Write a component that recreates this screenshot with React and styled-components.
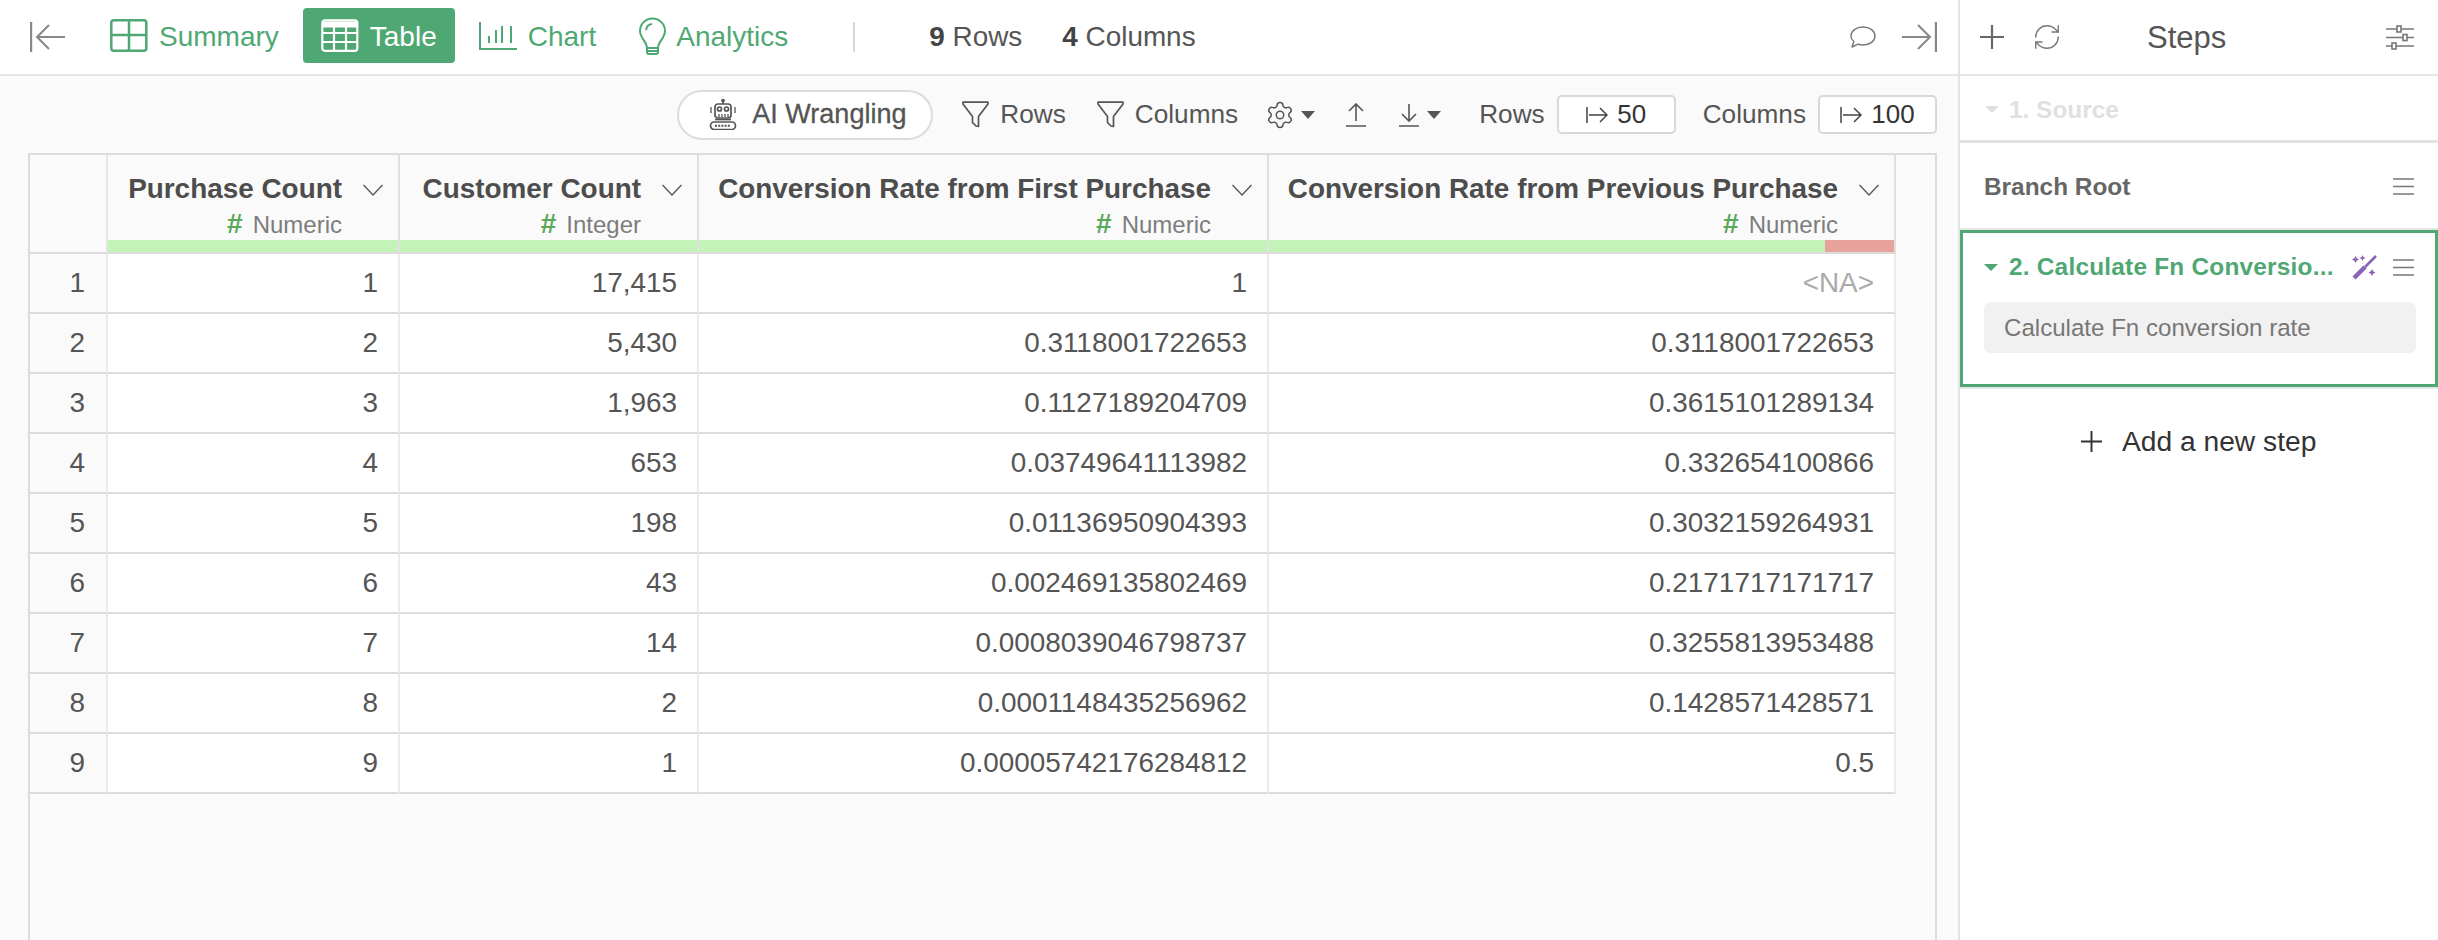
import React from "react";
import styled, { createGlobalStyle } from "styled-components";
import { Settings, RefreshCw } from "lucide-react";

const GREEN = "#4fa873";
const LINE = "#dcdcdc";

const Global = createGlobalStyle`
  html, body { margin: 0; padding: 0; background: #fff; }
  * { box-sizing: border-box; }
  body { font-family: "Liberation Sans", Arial, sans-serif; color: #555; }
`;

const Page = styled.div`
  display: grid;
  grid-template-columns: 1960px 478px;
  width: 2438px;
  height: 940px;
  overflow: hidden;
`;
const Main = styled.main`
  display: flex;
  flex-direction: column;
  min-width: 0;
  border-right: 2px solid #e4e4e4;
  background: #fafafa;
`;
const TopBar = styled.header`
  display: flex;
  align-items: center;
  height: 76px;
  flex: none;
  padding: 0 21px 0 30px;
  background: #fff;
  border-bottom: 2px solid #e6e6e6;
`;
const NavGroup = styled.nav`
  display: flex;
  align-items: center;
  gap: 6px;
  margin-left: 27px;
  padding-bottom: 3px;
`;
const NavItem = styled.div`
  display: flex;
  align-items: center;
  gap: ${(p) => p.$gap || 12}px;
  height: 55px;
  padding: 0 18px;
  border-radius: 4px;
  font-size: 28px;
  line-height: 32px;
  color: ${(p) => (p.$active ? "#fff" : GREEN)};
  background: ${(p) => (p.$active ? GREEN : "transparent")};
  span { padding-top: 3px; }
`;
const Separator = styled.span`
  width: 2px;
  height: 30px;
  margin-left: 47px;
  background: #d8d8d8;
`;
const Stat = styled.div`
  font-size: 27.9px;
  color: #555;
  margin-left: ${(p) => p.$ml}px;
  b { color: #444; }
`;
const Spacer = styled.div`
  flex: 1;
`;
const IconSlot = styled.span`
  display: inline-flex;
  color: ${(p) => p.$color || "#777"};
  margin-left: ${(p) => p.$ml || 0}px;
`;
const Toolbar = styled.div`
  display: flex;
  align-items: center;
  justify-content: flex-end;
  height: 77px;
  flex: none;
  padding-right: 21px;
  font-size: 26.2px;
  color: #555;
`;
const Pill = styled.button`
  display: flex;
  align-items: center;
  gap: 15px;
  width: 256px;
  height: 50px;
  padding: 0 0 0 30px;
  border: 2px solid #dcdcdc;
  border-radius: 25px;
  background: #fff;
  color: #555;
  font: 500 27px "Liberation Sans", Arial, sans-serif;
  -webkit-text-stroke: 0.3px #555;
`;
const ToolItem = styled.div`
  display: flex;
  align-items: center;
  gap: ${(p) => p.$gap ?? 11}px;
  margin-left: ${(p) => p.$ml}px;
`;
const Caret = styled.span`
  width: 0;
  height: 0;
  border-left: 7.5px solid transparent;
  border-right: 7.5px solid transparent;
  border-top: 8px solid #555;
`;
const LimitBox = styled.div`
  display: flex;
  align-items: center;
  justify-content: center;
  gap: 9px;
  width: 119px;
  height: 39px;
  margin-left: 12px;
  border: 2px solid #d8d8d8;
  border-radius: 5px;
  background: #fff;
  color: #333;
  font-size: 26px;
`;
const Frame = styled.section`
  flex: 1;
  margin: 0 21px 0 28px;
  border: 2px solid ${LINE};
  border-bottom: 0;
  background: #fafafa;
  min-height: 0;
`;
const Grid = styled.div`
  display: grid;
  grid-template-columns: 78px 292px 299px 570px 627px;
  width: 1866px;
`;
const Corner = styled.div`
  border-right: 2px solid #e6e6e6;
  border-bottom: 2px solid ${LINE};
`;
const HeadCell = styled.div`
  display: flex;
  flex-direction: column;
  height: 99px;
  background: #fafafa;
  border-right: 2px solid #e0e0e0;
  border-bottom: 2px solid ${LINE};
`;
const HeadText = styled.div`
  flex: 1;
  display: flex;
  flex-direction: column;
  align-items: flex-end;
  padding: 18px 15px 0 0;
`;
const TitleRow = styled.div`
  display: flex;
  align-items: center;
  gap: 21px;
  font-size: 27.9px;
  line-height: 32px;
  font-weight: 700;
  color: #4d4d4d;
  white-space: nowrap;
`;
const TypeRow = styled.div`
  display: flex;
  align-items: baseline;
  gap: 10px;
  margin: 5px 41px 0 0;
  font-size: 24px;
  line-height: 28px;
  color: #7d7d7d;
  b { color: #5aa85a; font-size: 28px; }
`;
const QualityBar = styled.div`
  display: flex;
  height: 12px;
  flex: none;
  background: #c3f3b6;
`;
const BadPart = styled.span`
  margin-left: auto;
  background: #e8a49c;
`;
const RowHead = styled.div`
  height: 60px;
  display: flex;
  align-items: center;
  justify-content: flex-end;
  padding-right: 21px;
  font-size: 27.9px;
  color: #555;
  background: #fafafa;
  border-right: 2px solid #ebebeb;
  border-bottom: 2px solid ${LINE};
`;
const Cell = styled.div`
  height: 60px;
  display: flex;
  align-items: center;
  justify-content: flex-end;
  padding-right: 20px;
  font-size: 27.9px;
  color: ${(p) => (p.$na ? "#aaa" : "#555")};
  background: #fff;
  border-right: 2px solid #ebebeb;
  border-bottom: 2px solid ${LINE};
`;
const Aside = styled.aside`
  display: flex;
  flex-direction: column;
  background: #fff;
`;
const SideHead = styled.div`
  display: flex;
  align-items: center;
  justify-content: space-between;
  height: 76px;
  padding: 0 24px 0 20px;
  border-bottom: 2px solid #e6e6e6;
`;
const SideTitle = styled.div`
  font-size: 31px;
  color: #555;
  margin: 2px auto 0 85px;
`;
const SideTools = styled.div`
  display: flex;
  align-items: center;
  gap: 28px;
`;
const SourceStep = styled.div`
  display: flex;
  align-items: center;
  gap: 10px;
  height: 67px;
  padding: 3px 0 0 25px;
  border-bottom: 3px solid #e2e2e2;
  color: #e0e0e0;
  font-size: 24.4px;
  font-weight: 700;
`;
const StepCaret = styled.span`
  width: 0;
  height: 0;
  border-left: 7px solid transparent;
  border-right: 7px solid transparent;
  border-top: 7px solid ${(p) => p.$color};
`;
const BranchRow = styled.div`
  display: flex;
  align-items: center;
  justify-content: space-between;
  height: 87px;
  padding: 2px 24px 0;
  border-bottom: 2px solid #e6e6e6;
  font-size: 24.4px;
  font-weight: 700;
  color: #666;
`;
const StepBox = styled.div`
  height: 157px;
  padding: 19px 19px 0 21px;
  border: 3px solid ${GREEN};
  box-shadow: 0 2px 0 #e6e6e6;
`;
const StepHead = styled.div`
  display: flex;
  align-items: center;
  height: 30px;
`;
const StepName = styled.div`
  margin-left: 11px;
  color: ${GREEN};
  font-size: 24.4px;
  font-weight: 700;
  white-space: nowrap;
  letter-spacing: 0.22px;
`;
const StepIcons = styled.div`
  display: flex;
  align-items: center;
  gap: 16px;
  margin-left: auto;
  padding-right: 2px;
`;
const StepNote = styled.div`
  display: flex;
  align-items: center;
  height: 51px;
  margin-top: 20px;
  padding-left: 20px;
  border-radius: 7px;
  background: #f1f1f1;
  color: #777;
  font-size: 24.1px;
`;
const AddStep = styled.div`
  display: flex;
  align-items: center;
  gap: 20px;
  margin-top: 38px;
  padding-left: 121px;
  font-size: 28.2px;
  color: #333;
`;

const Back = ({ flip }) => (
  <svg width="35" height="30" viewBox="0 0 35 30" fill="none" stroke="#888" strokeWidth="2" style={flip ? { transform: "scaleX(-1)" } : undefined}>
    <path d="M1 0V30" strokeWidth="2.4" />
    <path d="M7 15H35M19 3 7 15 19 27" />
  </svg>
);
const SummaryIcon = () => (
  <svg width="38" height="33" viewBox="0 0 38 33" fill="none" stroke={GREEN} strokeWidth="2.5">
    <rect x="1.3" y="1.3" width="35" height="30.5" rx="2.5" />
    <path d="M19 1V32M1 16H37" />
  </svg>
);
const TableIcon = () => (
  <svg width="38" height="33" viewBox="0 0 38 33" fill="none" stroke="#fff" strokeWidth="2.2">
    <rect x="1.3" y="1.3" width="35" height="30.5" rx="2.5" />
    <path d="M1 5.5H37" strokeWidth="6" />
    <path d="M1 14H37M1 23H37M13 5V32M25 5V32" />
  </svg>
);
const ChartIcon = () => (
  <svg width="38" height="28" viewBox="0 0 38 28" fill="none" stroke={GREEN} strokeWidth="2">
    <path d="M1 0V27H38" />
    <path d="M10 14V21M17 8V21M23 4V21M32 4V21" />
  </svg>
);
const BulbIcon = () => (
  <svg width="30" height="38" viewBox="0 0 30 38" fill="none" stroke={GREEN} strokeWidth="2">
    <path d="M9 31C9 25 2 21 2 14A12.5 12.5 0 0 1 27 14C27 21 20 25 20 31Z" />
    <path d="M9 31V35A2 2 0 0 0 11 37H18A2 2 0 0 0 20 35V31M9 34H20" />
    <path d="M8 13A7 7 0 0 1 14 7" />
  </svg>
);
const CommentIcon = () => (
  <svg width="26" height="22" viewBox="0 0 26 22" fill="none" stroke="#777" strokeWidth="1.4" strokeLinejoin="round">
    <path d="M13 1C20 1 25 5 25 10C25 15 20 19 13 19C11 19 9.5 18.7 8 18.2L2 21L3.8 15.5C2 14 1 12 1 10C1 5 6 1 13 1Z" />
  </svg>
);
const RobotIcon = () => (
  <svg width="28" height="31" viewBox="0 0 28 31" fill="none" stroke="#555" strokeWidth="1.7">
    <path d="M14 0V5" />
    <circle cx="14" cy="1.5" r="1" fill="#555" />
    <rect x="6" y="5" width="16" height="14" rx="3" />
    <circle cx="10.5" cy="10" r="2" />
    <circle cx="17.5" cy="10" r="2" />
    <path d="M10 15V18M13 15V18M16 15V18M19 15V18M2 8V14M26 8V14" strokeWidth="1.3" />
    <rect x="1.5" y="23" width="25" height="7.5" rx="3.7" />
    <path d="M6 20.5H22" />
    <path d="M6 26.8H22" strokeWidth="2" strokeDasharray="2 1.2" />
  </svg>
);
const Funnel = () => (
  <svg width="27" height="27" viewBox="0 0 27 27" fill="none" stroke="#555" strokeWidth="1.7" strokeLinejoin="round">
    <path d="M1 1.2H26V3L16.5 15.5V25.5L14 25L10.5 21.5V15.5L1 3Z" />
  </svg>
);
const Chevron = () => (
  <svg width="20" height="26" viewBox="0 0 20 26" fill="none" stroke="#555" strokeWidth="1.3">
    <path d="M0.5 9 10 19 19.5 9" />
  </svg>
);
const Upload = () => (
  <svg width="20" height="24" viewBox="0 0 20 24" fill="none" stroke="#555" strokeWidth="1.6">
    <path d="M10 1V18M3 8 10 1 17 8M0 23H20" />
  </svg>
);
const Download = () => (
  <svg width="20" height="24" viewBox="0 0 20 24" fill="none" stroke="#555" strokeWidth="1.6">
    <path d="M10 1V18M3 11 10 18 17 11M0 23H20" />
  </svg>
);
const ToRight = () => (
  <svg width="22" height="18" viewBox="0 0 22 18" fill="none" stroke="#444" strokeWidth="1.5">
    <path d="M1 1V17M3 9H21M14 2 21 9 14 16" />
  </svg>
);
const Plus = ({ size, color }) => (
  <svg width={size} height={size} viewBox="0 0 24 24" fill="none" stroke={color} strokeWidth="2.2">
    <path d="M12 0V24M0 12H24" />
  </svg>
);
const SlidersIcon = () => (
  <svg width="28" height="25" viewBox="0 0 28 25" fill="none" stroke="#777" strokeWidth="1.6">
    <path d="M0 4H28M0 12.5H28M0 21H28" />
    <rect x="11" y="1" width="4" height="6" fill="#fff" />
    <rect x="17" y="9.5" width="4" height="6" fill="#fff" />
    <rect x="6" y="18" width="4" height="6" fill="#fff" />
  </svg>
);
const Burger = () => (
  <svg width="21" height="17" viewBox="0 0 21 17" fill="none" stroke="#777" strokeWidth="1.6">
    <path d="M0 1H21M0 8.5H21M0 16H21" />
  </svg>
);
const Wand = () => (
  <svg width="25" height="25" viewBox="0 0 25 25" fill="none" stroke="#8a63b8">
    <path d="M2 23 13 12" strokeWidth="4.4" />
    <path d="M13 12 24 1" strokeWidth="2.6" />
    <g fill="#8a63b8" stroke="none">
      <path d="M3.5 1 4.7 3.3 7 4.5 4.7 5.7 3.5 8 2.3 5.7 0 4.5 2.3 3.3Z" />
      <path d="M10.5 0 11.4 2.1 13.5 3 11.4 3.9 10.5 6 9.6 3.9 7.5 3 9.6 2.1Z" />
      <path d="M20 14 21.2 16.3 23.5 17.5 21.2 18.7 20 21 18.8 18.7 16.5 17.5 18.8 16.3Z" />
    </g>
  </svg>
);

const columns = [
  { name: "Purchase Count", type: "Numeric" },
  { name: "Customer Count", type: "Integer" },
  { name: "Conversion Rate from First Purchase", type: "Numeric" },
  { name: "Conversion Rate from Previous Purchase", type: "Numeric", bad: 69 },
];
const rows = [
  ["1", "17,415", "1", "<NA>"],
  ["2", "5,430", "0.3118001722653", "0.3118001722653"],
  ["3", "1,963", "0.1127189204709", "0.3615101289134"],
  ["4", "653", "0.03749641113982", "0.332654100866"],
  ["5", "198", "0.01136950904393", "0.3032159264931"],
  ["6", "43", "0.002469135802469", "0.2171717171717"],
  ["7", "14", "0.0008039046798737", "0.3255813953488"],
  ["8", "2", "0.0001148435256962", "0.1428571428571"],
  ["9", "1", "0.00005742176284812", "0.5"],
];

export default function App() {
  return (
    <Page>
      <Global />
      <Main>
        <TopBar>
          <Back />
          <NavGroup>
            <NavItem $gap={11}><SummaryIcon /><span>Summary</span></NavItem>
            <NavItem $gap={11} $active><TableIcon /><span>Table</span></NavItem>
            <NavItem $gap={11}><ChartIcon /><span>Chart</span></NavItem>
            <NavItem $gap={8}><BulbIcon /><span>Analytics</span></NavItem>
          </NavGroup>
          <Separator />
          <Stat $ml={74}><b>9</b> Rows</Stat>
          <Stat $ml={40}><b>4</b> Columns</Stat>
          <Spacer />
          <CommentIcon />
          <IconSlot $ml={26}><Back flip /></IconSlot>
        </TopBar>
        <Toolbar>
          <Pill><RobotIcon />AI Wrangling</Pill>
          <ToolItem $ml={29}><Funnel />Rows</ToolItem>
          <ToolItem $ml={31}><Funnel />Columns</ToolItem>
          <ToolItem $ml={27} $gap={6}><Settings size={30} strokeWidth={1.2} /><Caret /></ToolItem>
          <ToolItem $ml={31}><Upload /></ToolItem>
          <ToolItem $ml={33} $gap={8}><Download /><Caret /></ToolItem>
          <ToolItem $ml={38}>Rows</ToolItem>
          <LimitBox><ToRight />50</LimitBox>
          <ToolItem $ml={27}>Columns</ToolItem>
          <LimitBox><ToRight />100</LimitBox>
        </Toolbar>
        <Frame>
          <Grid>
            <Corner />
            {columns.map((c) => (
              <HeadCell key={c.name}>
                <HeadText>
                  <TitleRow>{c.name}<Chevron /></TitleRow>
                  <TypeRow><b>#</b>{c.type}</TypeRow>
                </HeadText>
                <QualityBar>{c.bad && <BadPart style={{ width: c.bad }} />}</QualityBar>
              </HeadCell>
            ))}
            {rows.map((r, i) => (
              <React.Fragment key={i}>
                <RowHead>{i + 1}</RowHead>
                {r.map((v, j) => (
                  <Cell key={j} $na={v === "<NA>"}>{v}</Cell>
                ))}
              </React.Fragment>
            ))}
          </Grid>
        </Frame>
      </Main>
      <Aside>
        <SideHead>
          <SideTools>
            <Plus size={24} color="#666" />
            <IconSlot><RefreshCw size={30} strokeWidth={1.1} /></IconSlot>
          </SideTools>
          <SideTitle>Steps</SideTitle>
          <SlidersIcon />
        </SideHead>
        <SourceStep><StepCaret $color="#e0e0e0" />1. Source</SourceStep>
        <BranchRow>Branch Root<Burger /></BranchRow>
        <StepBox>
          <StepHead>
            <StepCaret $color={GREEN} />
            <StepName>2. Calculate Fn Conversio...</StepName>
            <StepIcons><Wand /><Burger /></StepIcons>
          </StepHead>
          <StepNote>Calculate Fn conversion rate</StepNote>
        </StepBox>
        <AddStep><Plus size={21} color="#333" />Add a new step</AddStep>
      </Aside>
    </Page>
  );
}
